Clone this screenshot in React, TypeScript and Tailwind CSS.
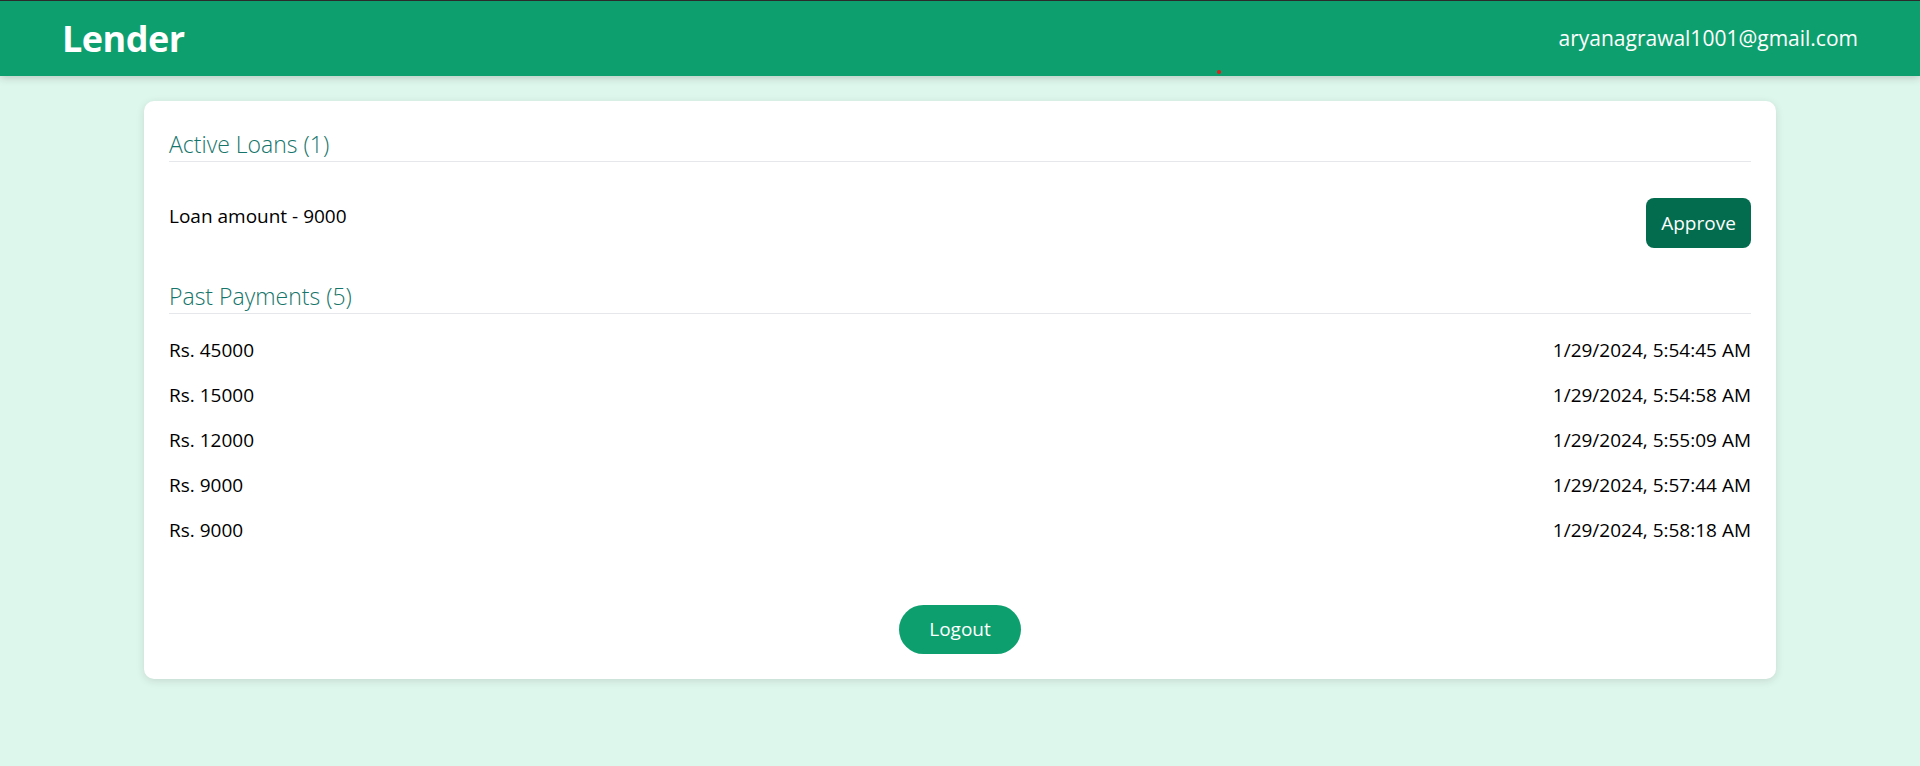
const payments = [
  { amount: 45000, time: "1/29/2024, 5:54:45 AM" },
  { amount: 15000, time: "1/29/2024, 5:54:58 AM" },
  { amount: 12000, time: "1/29/2024, 5:55:09 AM" },
  { amount: 9000, time: "1/29/2024, 5:57:44 AM" },
  { amount: 9000, time: "1/29/2024, 5:58:18 AM" },
];

function SectionTitle({ children }: { children: string }) {
  return (
    <h2 className="border-b border-[#e5e7eb] pt-[2px] text-[23px] leading-[33px] font-light text-[#15756a]">
      {children}
    </h2>
  );
}

export default function App() {
  return (
    <div className="min-h-screen bg-[#def7ec] font-['Open_Sans',sans-serif] text-black">
      <header className="relative z-10 flex h-[76px] items-center justify-between border-t border-[#2b2b2b] bg-[#0e9f6e] px-[62px] shadow-[0_2px_8px_rgba(0,0,0,0.18)]">
        <h1 className="text-[36px] font-bold tracking-[-0.5px] text-white">Lender</h1>
        <span className="text-[21px] text-white">aryanagrawal1001@gmail.com</span>
        <span className="absolute left-[1217px] top-[69px] h-[4px] w-[4px] rounded-full bg-[#e11d1d]" />
      </header>

      <main className="mx-auto mt-[25px] w-[85%] rounded-[10px] bg-white p-[25px] shadow-[0_2px_8px_rgba(0,0,0,0.12)]">
        <SectionTitle>Active Loans (1)</SectionTitle>

        <div className="mt-[36px] flex items-start justify-between">
          <p className="mt-[4px] text-[19px]">Loan amount - 9000</p>
          <button className="h-[50px] w-[105px] rounded-[8px] bg-[#046c4e] text-[19px] text-white">
            Approve
          </button>
        </div>

        <div className="mt-[30px]">
          <SectionTitle>Past Payments (5)</SectionTitle>
        </div>

        <ul className="mt-[22px] flex flex-col gap-[17px]">
          {payments.map((p, i) => (
            <li key={i} className="flex justify-between text-[19px] leading-[28px]">
              <span>Rs. {p.amount}</span>
              <span>{p.time}</span>
            </li>
          ))}
        </ul>

        <div className="mt-[61px] flex justify-center">
          <button className="h-[49px] w-[122px] rounded-full bg-[#0e9f6e] text-[19px] text-white">
            Logout
          </button>
        </div>
      </main>
    </div>
  );
}
